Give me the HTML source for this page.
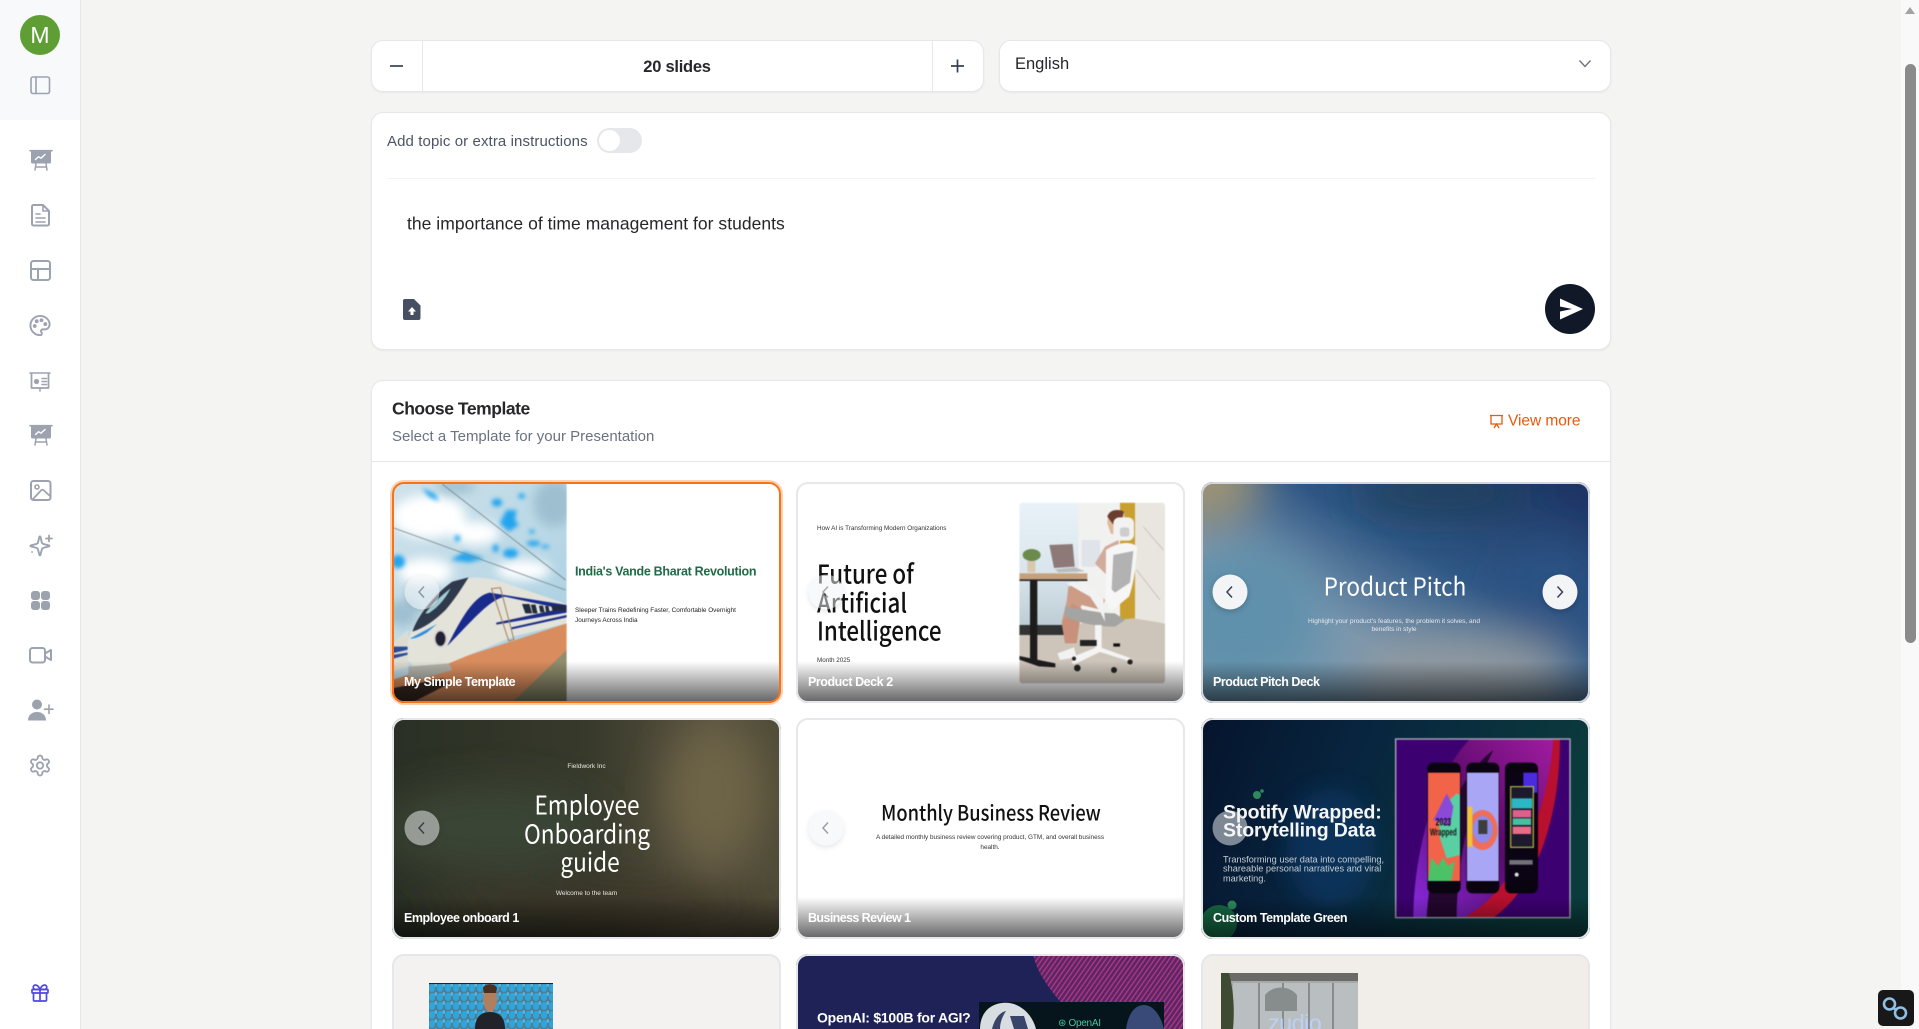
<!DOCTYPE html>
<html lang="en">
<head>
<meta charset="utf-8">
<title>Choose Template</title>
<style>
html,body{margin:0;padding:0;width:1919px;height:1029px;overflow:hidden;background:#f4f4f2;font-family:"Liberation Sans",sans-serif;color:#1f2937}
*{box-sizing:border-box}
#root{position:absolute;left:0;top:0;width:1919px;height:1029px;overflow:hidden;background:#f4f4f2}
.a{position:absolute}
.t{position:absolute;white-space:nowrap;transform:translateY(-50%);line-height:1.2}
.c{position:absolute;white-space:nowrap;transform:translate(-50%,-50%);line-height:1.2;text-align:center}
.n{font-family:"Noto Sans CJK JP","Liberation Sans",sans-serif;font-weight:500}
.card{position:absolute;background:#fff;border:1px solid #e5e7eb;border-radius:12px;box-shadow:0 1px 2px rgba(0,0,0,.05)}
.tile{position:absolute;width:389px;height:221px;border-radius:12px;overflow:hidden;background:#fff}
.in{position:absolute;width:1919px;height:1029px}
.bd{position:absolute;width:389px;height:221px;border-radius:12px;border:2px solid #e5e7eb}
.ov{position:absolute;height:42px;background:linear-gradient(to bottom,rgba(0,0,0,0),rgba(0,0,0,.62))}
.cap{position:absolute;white-space:nowrap;transform:translateY(-50%);color:#fff;font-size:12.5px;font-weight:700;letter-spacing:-.45px}
.btn{position:absolute;width:35px;height:35px;border-radius:50%;background:#f3f4f6;box-shadow:0 2px 6px rgba(0,0,0,.2);transform:translate(-50%,-50%)}
.btn svg{position:absolute;left:9px;top:9px}
svg{display:block}
</style>
</head>
<body>
<div id="root">

<!-- Sidebar -->
<div class="a" style="left:0;top:0;width:81px;height:1029px;background:#fff;border-right:1px solid #e5e7eb"></div>
<div class="a" style="left:0;top:0;width:80px;height:120px;background:#f8f9fb"></div>
<div class="a" style="left:20px;top:15px;width:40px;height:40px;border-radius:50%;background:#5f9e35;color:#fff;font-size:23px;line-height:40px;text-align:center">M</div>

<svg class="a" style="left:0;top:0" width="80" height="1029" viewBox="0 0 80 1029" fill="none" stroke="#9ca3af" stroke-width="2" stroke-linecap="round" stroke-linejoin="round">
  <!-- panel -->
  <rect x="31" y="77" width="18.5" height="16.5" rx="2" stroke-width="1.6"/>
  <path d="M36 77v16.5" stroke-width="1.6"/>
  <!-- presentation 1 -->
  <g id="pres">
    <path d="M30 150.7h22" stroke-width="1.6"/>
    <path d="M31 151h20v11a1.500 1.500 0 0 1-1.500 1.500h-17a1.500 1.500 0 0 1-1.500-1.500z" fill="#9ca3af" stroke="none"/>
    <path d="M35.500 159.500l3-2.800 2.500 1.500 4-3.700" stroke="#fff" stroke-width="1.400"/>
    <path d="M36 163.500l-1 6.500M46 163.500l1 6.500M35.500 167h11" stroke-width="1.500"/>
  </g>
  <!-- doc -->
  <path d="M33.500 205h9.500l6 6v13a1.500 1.500 0 0 1-1.500 1.500h-14a1.500 1.500 0 0 1-1.500-1.500v-17.500a1.500 1.500 0 0 1 1.500-1.500z"/>
  <path d="M43 205v6h6M36 214h4M36 218h9M36 222h9" stroke-width="1.600"/>
  <!-- layout -->
  <rect x="31" y="261" width="19" height="19" rx="2.500"/>
  <path d="M31 269h19M38 269v11"/>
  <!-- palette -->
  <g transform="translate(28.500,314) scale(.96)">
    <path d="M12 22a1 1 0 0 1 0-20 10 9 0 0 1 10 9 5 5 0 0 1-5 5h-2.250a1.750 1.750 0 0 0-1.400 2.800l.3.4a1.750 1.750 0 0 1-1.400 2.800z"/>
    <circle cx="13.500" cy="6.500" r="1" fill="#9ca3af"/><circle cx="17.500" cy="10.500" r="1" fill="#9ca3af"/><circle cx="6.500" cy="12.500" r="1" fill="#9ca3af"/><circle cx="8.500" cy="7.500" r="1" fill="#9ca3af"/>
  </g>
  <!-- slides 5 -->
  <g transform="translate(0,1)">
  <path d="M30 372h20" stroke-width="1.600"/>
  <path d="M31.500 373v14h17v-14" stroke-width="1.800"/>
  <path d="M40 387v3" stroke-width="1.500"/>
  <circle cx="36.500" cy="380.500" r="2.600" fill="#9ca3af" stroke="none"/>
  <path d="M42 377.500h4.500M42 380.500h4.500M42 383.500h4.500" stroke-width="1.500"/>
  </g>
  <!-- presentation 2 -->
  <use href="#pres" transform="translate(0,275)"/>
  <!-- image -->
  <rect x="31" y="481" width="19.500" height="19" rx="2.500"/>
  <circle cx="37" cy="487" r="2" stroke-width="1.600"/>
  <path d="M33 499l8-8.500c1-1 2-1 3 0l6 5.500" stroke-width="1.700"/>
  <!-- sparkles -->
  <g transform="translate(28.500,534.500) scale(.95)">
    <path d="M9.937 15.500A2 2 0 0 0 8.500 14.063l-6.135-1.582a.5.5 0 0 1 0-.962L8.500 9.936A2 2 0 0 0 9.937 8.500l1.582-6.135a.5.5 0 0 1 .963 0L14.063 8.500A2 2 0 0 0 15.500 9.937l6.135 1.581a.5.5 0 0 1 0 .964L15.500 14.063a2 2 0 0 0-1.437 1.437l-1.582 6.135a.5.5 0 0 1-.963 0z"/>
  </g>
  <path d="M49 535.500v6M46 538.500h6M32 552h.1" stroke-width="1.800"/>
  <!-- grid -->
  <g fill="#9ca3af" stroke="none">
    <rect x="31" y="591" width="9" height="9" rx="3"/><rect x="41" y="591" width="9" height="9" rx="3"/>
    <rect x="31" y="601" width="9" height="9" rx="3"/><rect x="41" y="601" width="9" height="9" rx="3"/>
  </g>
  <!-- video -->
  <rect x="30" y="648" width="15" height="14.500" rx="2.500"/>
  <path d="M45 653.500l6-3.500v10l-6-3.500"/>
  <!-- user plus -->
  <circle cx="37" cy="704.500" r="5" fill="#9ca3af" stroke="none"/>
  <path d="M28 720.500c0-5.500 4-8.500 9-8.500s9 3 9 8.500z" fill="#9ca3af" stroke="none"/>
  <path d="M49 705v8.500M44.500 709.200h8.500" stroke-width="1.600"/>
  <!-- gear -->
  <g transform="translate(28,753.500)">
    <path d="M12.220 2h-.44a2 2 0 0 0-2 2v.18a2 2 0 0 1-1 1.730l-.43.25a2 2 0 0 1-2 0l-.15-.08a2 2 0 0 0-2.730.73l-.22.38a2 2 0 0 0 .73 2.730l.15.1a2 2 0 0 1 1 1.720v.51a2 2 0 0 1-1 1.740l-.15.09a2 2 0 0 0-.73 2.730l.22.38a2 2 0 0 0 2.730.73l.15-.08a2 2 0 0 1 2 0l.43.25a2 2 0 0 1 1 1.730V20a2 2 0 0 0 2 2h.44a2 2 0 0 0 2-2v-.18a2 2 0 0 1 1-1.730l.43-.25a2 2 0 0 1 2 0l.15.08a2 2 0 0 0 2.730-.73l.22-.39a2 2 0 0 0-.73-2.730l-.15-.08a2 2 0 0 1-1-1.740v-.5a2 2 0 0 1 1-1.740l.15-.09a2 2 0 0 0 .73-2.730l-.22-.38a2 2 0 0 0-2.730-.73l-.15.08a2 2 0 0 1-2 0l-.43-.25a2 2 0 0 1-1-1.730V4a2 2 0 0 0-2-2z" stroke-width="1.800"/>
    <circle cx="12" cy="12" r="3.200" stroke-width="1.800"/>
  </g>
  <!-- gift -->
  <g stroke="#4f46e5" stroke-width="1.700" transform="translate(0,1)">
    <rect x="32" y="988.500" width="16" height="3.500" rx=".8"/>
    <path d="M33.500 992v7a1 1 0 0 0 1 1h11a1 1 0 0 0 1-1v-7M40 988.500V1000"/>
    <path d="M40 988.500c-1-3-3-4.500-4.500-4.500a2.200 2.200 0 0 0 0 4.500zM40 988.500c1-3 3-4.500 4.500-4.500a2.200 2.200 0 0 1 0 4.500z"/>
  </g>
</svg>

<!-- Stepper -->
<div class="card" style="left:371px;top:40px;width:613px;height:52px"></div>
<div class="a" style="left:422px;top:41px;width:1px;height:50px;background:#e5e7eb"></div>
<div class="a" style="left:932px;top:41px;width:1px;height:50px;background:#e5e7eb"></div>
<svg class="a" style="left:389px;top:59px" width="16" height="16" fill="none" stroke="#374151" stroke-width="1.700"><path d="M1 7h13"/></svg>
<svg class="a" style="left:950px;top:58px" width="16" height="16" fill="none" stroke="#374151" stroke-width="1.700"><path d="M1 8h13M7.500 1.500v13"/></svg>
<div class="c" style="left:677px;top:67.500px;font-size:16.500px;font-weight:700;color:#27272a;letter-spacing:-.25px">20 slides</div>

<!-- Language -->
<div class="card" style="left:999px;top:40px;width:612px;height:52px"></div>
<div class="t" style="left:1015px;top:65px;font-size:16.500px;color:#27272a;letter-spacing:0">English</div>
<svg class="a" style="left:1578px;top:58px" width="14" height="12" fill="none" stroke="#6b7280" stroke-width="1.400"><path d="M1.500 2.500l5.500 6 5.500-6"/></svg>

<!-- Prompt card -->
<div class="card" style="left:371px;top:112px;width:1240px;height:238px"></div>
<div class="t" style="left:387px;top:141.500px;font-size:15px;color:#4b5563;letter-spacing:.1px">Add topic or extra instructions</div>
<div class="a" style="left:597px;top:128px;width:45px;height:25px;border-radius:13px;background:#e5e7eb"></div>
<div class="a" style="left:599px;top:130px;width:21px;height:21px;border-radius:50%;background:#fff"></div>
<div class="a" style="left:387px;top:178px;width:1208px;height:1px;background:#f1f2f4"></div>
<div class="t" style="left:407px;top:223.500px;font-size:17.500px;color:#27272a;letter-spacing:.03px">the importance of time management for students</div>
<svg class="a" style="left:403px;top:299px" width="18" height="21" viewBox="0 0 18 21"><path d="M2 0h9l6.500 6.500V19a2 2 0 0 1-2 2H2a2 2 0 0 1-2-2V2a2 2 0 0 1 2-2z" fill="#475062"/><path d="M9 8l4 4.500h-2.500V16h-3v-3.500H5z" fill="#fff"/></svg>
<div class="a" style="left:1545px;top:284px;width:50px;height:50px;border-radius:50%;background:#111827"></div>
<svg class="a" style="left:1558px;top:297px" width="26" height="24" viewBox="0 0 26 24"><path d="M2 1.500L25 12 2 22.500V14.500l12-2.500-12-2.500z" fill="#fff"/></svg>

<!-- Template card -->
<div class="card" style="left:371px;top:380px;width:1240px;height:670px"></div>
<div class="t" style="left:392px;top:409px;font-size:17.500px;font-weight:700;color:#27272a;letter-spacing:-.45px">Choose Template</div>
<div class="t" style="left:392px;top:436.500px;font-size:15px;color:#6b7280;letter-spacing:0">Select a Template for your Presentation</div>
<svg class="a" style="left:1489px;top:414px" width="15" height="15" viewBox="0 0 15 15" fill="none" stroke="#ea580c" stroke-width="1.300"><path d="M1 1.500h13M2 1.500v8.500h11v-8.500M5 14l2.500-4 2.500 4"/></svg>
<div class="t" style="left:1508px;top:422px;font-size:15.500px;color:#ea580c;letter-spacing:-.05px">View more</div>
<div class="a" style="left:372px;top:461px;width:1238px;height:1px;background:#e5e7eb"></div>

<!-- Tile 1 -->
<div class="tile" style="left:392px;top:482px"><div class="in" style="left:-392px;top:-482px">
  <svg class="a" style="left:388px;top:480px;filter:blur(.5px)" width="400" height="228" viewBox="0 0 1182 684" preserveAspectRatio="none">
    <defs>
      <linearGradient id="sky" x1="0" y1="0" x2="1" y2="1"><stop offset="0" stop-color="#cfe2ea"/><stop offset=".6" stop-color="#b8d7e6"/><stop offset="1" stop-color="#9fcadd"/></linearGradient>
      <filter id="b6" x="-40%" y="-40%" width="180%" height="180%"><feGaussianBlur stdDeviation="6"/></filter><filter id="b14" x="-50%" y="-50%" width="200%" height="200%"><feGaussianBlur stdDeviation="16"/></filter>
    </defs>
    <rect width="528" height="684" fill="url(#sky)"/>
    <g filter="url(#b14)" fill="#ffffff"><ellipse cx="120" cy="110" rx="110" ry="65"/><ellipse cx="110" cy="275" rx="80" ry="40"/><ellipse cx="400" cy="270" rx="80" ry="30"/><ellipse cx="260" cy="160" rx="70" ry="35"/></g>
    <g filter="url(#b14)" fill="#9dbfd0"><ellipse cx="490" cy="70" rx="60" ry="70"/><ellipse cx="40" cy="400" rx="50" ry="40"/><ellipse cx="200" cy="20" rx="60" ry="20"/></g>
    <g filter="url(#b6)" fill="#22a4ee">
      <path d="M330 130l20-40 30 0-5 30 12 15-30 20z"/><path d="M185 240l40-25 60 20-45 12z"/><ellipse cx="362" cy="220" rx="22" ry="14"/><path d="M100 22l40 20 10 22-30-15z"/><ellipse cx="322" cy="68" rx="16" ry="12"/><ellipse cx="30" cy="245" rx="20" ry="20"/><ellipse cx="430" cy="190" rx="20" ry="8"/><ellipse cx="318" cy="205" rx="9" ry="12"/><ellipse cx="205" cy="175" rx="8" ry="10"/><ellipse cx="395" cy="48" rx="10" ry="8"/><ellipse cx="425" cy="155" rx="8" ry="6"/><ellipse cx="465" cy="200" rx="12" ry="5"/>
    </g>
    <path d="M160 12L525 300M12 142L525 330" stroke="#76878f" stroke-width="2.500" fill="none"/>
    <path d="M12 684V600L528 430V684z" fill="#d98d5e"/>
    <path d="M350 684L528 510V684z" fill="#8f8d6c"/>
    <path d="M12 684V625l150 -30 20 15L40 684z" fill="#3a2a22"/>
    <path d="M12 490L60 450V560L12 575z" fill="#dcdcd2"/>
    <path d="M12 500h50v8l-50 12zM12 525l50-8v6l-50 14z" fill="#2a4b9a"/>
    <path d="M58 540V490C70 430 130 340 195 305C230 290 280 290 320 300L528 372V430L370 470L180 550L130 575L85 570z" fill="#e3e3da"/>
    <path d="M72 455C85 410 140 340 190 305L238 292C215 330 195 360 170 390C140 420 105 445 72 455z" fill="#2f3a4c"/>
    <path d="M110 400C130 370 160 345 185 325C170 355 150 380 120 400z" fill="#a4d2d8"/>
    <path d="M66 475L145 432L115 458C95 470 80 476 66 476z" fill="#2e8fe0"/>
    <path d="M175 498C215 420 250 350 300 338L528 375V390L345 350C300 360 260 410 175 498z" fill="#182a8c"/>
    <path d="M320 428L528 382V398L320 434zM365 442L528 405V412L365 448z" fill="#1c2c88"/>
    <ellipse cx="155" cy="476" rx="17" ry="24" fill="#223" stroke="#ccc" stroke-width="5"/>
    <path d="M396 372h22l8 28h-20zM422 374h14l6 26h-14zM446 377h12l5 20h-13zM464 378h10l4 18h-11zM482 376h44v16h-40z" fill="#222b3d"/>
    <path d="M306 326l26-3 40 155-15 5z" fill="none" stroke="#a67e5a" stroke-width="3"/>
    <path d="M60 560l120-10 10 20-100 30-30-10z" fill="#b4b4ac"/>
    <rect x="528" y="0" width="660" height="684" fill="#fff"/>
  </svg>
  <div class="t" style="left:575px;top:571.500px;font-size:12.500px;font-weight:700;color:#1f6b46;letter-spacing:-.3px">India's Vande Bharat Revolution</div>
  <div class="t" style="left:575px;top:610.500px;font-size:6.400px;color:#222">Sleeper Trains Redefining Faster, Comfortable Overnight</div>
  <div class="t" style="left:575px;top:621px;font-size:6.400px;color:#222">Journeys Across India</div>
  <div class="ov" style="left:392px;top:661px;width:389px"></div>
  <div class="cap" style="left:404px;top:682px">My Simple Template</div>
  <div class="btn" style="left:422px;top:592px;opacity:.5"><svg width="17" height="17" fill="none" stroke="#4b5563" stroke-width="1.500"><path d="M10.500 3L5.500 8.500l5 5.500"/></svg></div>
</div></div>
<div class="a" style="left:390px;top:480px;width:393px;height:225px;border-radius:14px;border:2px solid rgba(249,115,22,.32)"></div>
<div class="bd" style="left:392px;top:482px;border-color:#f97316"></div>

<!-- Tile 2 -->
<div class="tile" style="left:796px;top:482px"><div class="in" style="left:-796px;top:-482px">
  <div class="t" style="left:817px;top:529px;font-size:6.350px;color:#333">How AI is Transforming Modern Organizations</div>
  <div class="t n" style="left:817px;top:572.500px;font-size:26px;color:#111;transform-origin:left center;transform:translateY(-50%) scaleX(.86)">Future of</div>
  <div class="t n" style="left:817px;top:601.500px;font-size:26px;color:#111;transform-origin:left center;transform:translateY(-50%) scaleX(.86)">Artificial</div>
  <div class="t n" style="left:817px;top:630px;font-size:26px;color:#111;transform-origin:left center;transform:translateY(-50%) scaleX(.86)">Intelligence</div>
  <div class="t" style="left:817px;top:661px;font-size:6.300px;color:#333">Month 2025</div>
  <svg class="a" style="left:1000px;top:490px;filter:blur(.5px)" width="190" height="215" viewBox="0 0 570 645">
    <defs>
      <clipPath id="pc"><rect x="58" y="38" width="437" height="542" rx="10"/></clipPath>
      <linearGradient id="win" x1="0" y1="0" x2="0" y2="1"><stop offset="0" stop-color="#e9f2f8"/><stop offset=".55" stop-color="#d8e4ec"/><stop offset="1" stop-color="#b8c8d0"/></linearGradient>
    </defs>
    <g clip-path="url(#pc)">
      <rect x="58" y="38" width="180" height="400" fill="url(#win)"/>
      <rect x="235" y="38" width="130" height="400" fill="#f1f1ef"/>
      <rect x="360" y="38" width="45" height="360" fill="#c9a030"/>
      <rect x="405" y="38" width="90" height="360" fill="#e9e5df"/>
      <path d="M410 240L480 330M430 110L490 180" stroke="#bdb6ac" stroke-width="2" fill="none"/>
      <path d="M58 430L190 405L400 385L495 400V580H58z" fill="#cdc5ba"/>
      <rect x="58" y="405" width="135" height="30" fill="#333"/>
      <rect x="58" y="250" width="204" height="20" fill="#c6a07c"/>
      <rect x="58" y="268" width="204" height="5" fill="#2a2a2a"/>
      <rect x="90" y="270" width="22" height="240" fill="#1c1c1c"/>
      <path d="M58 498l108 22v12l-50-3-58-20z" fill="#1c1c1c"/>
      <path d="M148 165l70-3 6 68-62 4z" fill="#8d7a78"/>
      <path d="M165 238l60-6 30 12-80 3z" fill="#bbb"/>
      <rect x="82" y="212" width="24" height="35" rx="4" fill="#d8c8b0"/>
      <ellipse cx="95" cy="195" rx="27" ry="18" fill="#6c8a4c"/>
      <rect x="245" y="150" width="55" height="80" fill="#dfe4ea"/>
      <path d="M322 100c0-30 20-40 50-35l5 30-20 45-25-10z" fill="#e0b8a0"/>
      <path d="M322 80c5-20 30-25 50-15l-12 40-12 10z" fill="#6a3d2e"/>
      <path d="M285 220l30-50 40-20 10 60-30 60z" fill="#d2ab9c"/>
      <path d="M205 290c40-10 80 10 110 40l-10 30-60-15-30 60-30-10 15-60z" fill="#cc9c87"/>
      <path d="M185 400l30-60 30 15-15 105h-35z" fill="#c9917b"/>
      <path d="M172 490l50-18 8 30-50 8z" fill="#f2f2f2"/>
      <path d="M318 180c30-20 70-30 94-10-5 60-10 110-25 150l-55 45-15-40z" fill="#f6f6f6"/>
      <path d="M340 195l60-12-10 95-45 30-10-10z" fill="#b2b2b2"/>
      <rect x="340" y="82" width="62" height="70" rx="18" fill="#f2f2f2"/>
      <rect x="360" y="112" width="28" height="28" rx="8" fill="#cdcdcd"/>
      <path d="M195 350c40 5 100 20 150 20l30 20-30 20c-50 0-110-10-150-30z" fill="#a4a4a2"/>
      <path d="M200 280c30-15 70 10 110 45l5 70-15-30-30-45z" fill="#f2f2f2"/>
      <rect x="285" y="405" width="20" height="70" fill="#f4f4f4"/>
      <path d="M295 470l-75 30-5 20 10 2 75-36 80 25 5 15 10-2-5-20z" fill="#f4f4f4"/>
      <path d="M340 460h20v10h-20z" fill="#111"/>
      <circle cx="232" cy="534" r="10" fill="#222"/><circle cx="342" cy="540" r="9" fill="#222"/><circle cx="390" cy="516" r="8" fill="#222"/><circle cx="222" cy="506" r="6" fill="#222"/>
      <rect x="240" y="450" width="50" height="18" fill="#222"/>
    </g>
  </svg>
  <div class="ov" style="left:796px;top:661px;width:389px"></div>
  <div class="cap" style="left:808px;top:682px">Product Deck 2</div>
  <div class="btn" style="left:826px;top:592px;opacity:.5"><svg width="17" height="17" fill="none" stroke="#4b5563" stroke-width="1.500"><path d="M10.500 3L5.500 8.500l5 5.500"/></svg></div>
</div></div>
<div class="bd" style="left:796px;top:482px"></div>

<!-- Tile 3 -->
<div class="tile" style="left:1201px;top:482px;background:#2c4f7f"><div class="in" style="left:-1201px;top:-482px">
  <svg class="a" style="left:1201px;top:482px" width="389" height="221" viewBox="0 0 389 221">
    <defs>
      <filter id="b30" x="-60%" y="-60%" width="220%" height="220%"><feGaussianBlur stdDeviation="22"/></filter>
      <linearGradient id="p3" x1="0" y1="1" x2="1" y2="0"><stop offset="0" stop-color="#6a96ae"/><stop offset=".35" stop-color="#7a97ae"/><stop offset=".62" stop-color="#2f5785"/><stop offset="1" stop-color="#1c3262"/></linearGradient>
    </defs>
    <rect width="389" height="221" fill="url(#p3)"/>
    <g filter="url(#b30)">
      <ellipse cx="0" cy="0" rx="60" ry="45" fill="#9c9376"/>
      <ellipse cx="40" cy="130" rx="80" ry="70" fill="#5f90ac"/>
      <ellipse cx="240" cy="10" rx="90" ry="20" fill="#1f3f58"/>
      <ellipse cx="350" cy="110" rx="50" ry="50" fill="#2c5284"/>
      <ellipse cx="260" cy="190" rx="110" ry="40" fill="#8f989f"/>
    </g>
  </svg>
  <div class="c n" style="left:1395px;top:585.500px;font-size:24.500px;font-weight:400;color:#fff;transform:translate(-50%,-50%) scaleX(.92)">Product Pitch</div>
  <div class="c" style="left:1394px;top:622px;font-size:6.550px;color:#e5e9ee">Highlight your product's features, the problem it solves, and</div>
  <div class="c" style="left:1394px;top:630px;font-size:6.550px;color:#e5e9ee">benefits in style</div>
  <div class="ov" style="left:1201px;top:661px;width:389px"></div>
  <div class="cap" style="left:1213px;top:682px">Product Pitch Deck</div>
  <div class="btn" style="left:1230px;top:592px"><svg width="17" height="17" fill="none" stroke="#374151" stroke-width="1.500"><path d="M10.500 3L5.500 8.500l5 5.500"/></svg></div>
  <div class="btn" style="left:1560px;top:592px"><svg width="17" height="17" fill="none" stroke="#374151" stroke-width="1.500"><path d="M6 3l5 5.500L6 14"/></svg></div>
</div></div>
<div class="bd" style="left:1201px;top:482px;border-color:#d4d6de"></div>

<!-- Tile 4 -->
<div class="tile" style="left:392px;top:718px;background:#2b3026"><div class="in" style="left:-392px;top:-718px">
  <svg class="a" style="left:392px;top:718px" width="389" height="221" viewBox="0 0 389 221">
    <defs>
      <linearGradient id="p4" x1="0" y1="0" x2="1" y2="0"><stop offset="0" stop-color="#2a3025"/><stop offset=".5" stop-color="#37392b"/><stop offset=".82" stop-color="#5a5340"/><stop offset="1" stop-color="#4f4b37"/></linearGradient>
      <filter id="b20" x="-60%" y="-60%" width="220%" height="220%"><feGaussianBlur stdDeviation="20"/></filter>
    </defs>
    <rect width="389" height="221" fill="url(#p4)"/>
    <g filter="url(#b20)">
      <ellipse cx="322" cy="75" rx="50" ry="70" fill="#6d6347"/>
      <ellipse cx="100" cy="110" rx="110" ry="45" fill="#3a4434"/>
      <ellipse cx="210" cy="190" rx="170" ry="25" fill="#3a3628"/>
    </g>
  </svg>
  <div class="c" style="left:586.500px;top:767px;font-size:6.500px;color:#e8e8e0">Fieldwork Inc</div>
  <div class="c n" style="left:587px;top:804px;font-size:26px;font-weight:400;color:#fff;transform:translate(-50%,-50%) scaleX(.87)">Employee</div>
  <div class="c n" style="left:587px;top:832.500px;font-size:26px;font-weight:400;color:#fff;transform:translate(-50%,-50%) scaleX(.87)">Onboarding</div>
  <div class="c n" style="left:590px;top:861px;font-size:26px;font-weight:400;color:#fff;transform:translate(-50%,-50%) scaleX(.87)">guide</div>
  <div class="c" style="left:586.500px;top:894px;font-size:6.500px;color:#e8e8e0">Welcome to the team</div>
  <div class="ov" style="left:392px;top:897px;width:389px"></div>
  <div class="cap" style="left:404px;top:918px">Employee onboard 1</div>
  <div class="btn" style="left:422px;top:828px;opacity:.5"><svg width="17" height="17" fill="none" stroke="#374151" stroke-width="1.500"><path d="M10.500 3L5.500 8.500l5 5.500"/></svg></div>
</div></div>
<div class="bd" style="left:392px;top:718px"></div>

<!-- Tile 5 -->
<div class="tile" style="left:796px;top:718px"><div class="in" style="left:-796px;top:-718px">
  <div class="c n" style="left:991px;top:813px;font-size:21px;color:#111;transform:translate(-50%,-50%) scaleX(.87)">Monthly Business Review</div>
  <div class="c" style="left:990px;top:838px;font-size:6.400px;color:#333">A detailed monthly business review covering product, GTM, and overall business</div>
  <div class="c" style="left:990px;top:848px;font-size:6.400px;color:#333">health.</div>
  <div class="ov" style="left:796px;top:897px;width:389px"></div>
  <div class="cap" style="left:808px;top:918px;letter-spacing:-.6px">Business Review 1</div>
  <div class="btn" style="left:826px;top:828px;opacity:.5"><svg width="17" height="17" fill="none" stroke="#374151" stroke-width="1.500"><path d="M10.500 3L5.500 8.500l5 5.500"/></svg></div>
</div></div>
<div class="bd" style="left:796px;top:718px"></div>

<!-- Tile 6 -->
<div class="tile" style="left:1201px;top:718px;background:#07203c"><div class="in" style="left:-1201px;top:-718px">
  <svg class="a" style="left:1201px;top:718px" width="389" height="221" viewBox="0 0 389 221">
    <defs>
      <linearGradient id="p6" x1="0" y1=".1" x2="1" y2=".3"><stop offset="0" stop-color="#06152e"/><stop offset=".4" stop-color="#08253f"/><stop offset="1" stop-color="#0b3b3c"/></linearGradient>
      <filter id="b10" x="-60%" y="-60%" width="220%" height="220%"><feGaussianBlur stdDeviation="10"/></filter>
    </defs>
    <rect width="389" height="221" fill="url(#p6)"/>
    <ellipse cx="130" cy="130" rx="45" ry="60" fill="#0c3a6a" opacity=".6" filter="url(#b10)"/>
    <circle cx="56" cy="77" r="4" fill="#2e8a5c"/>
    <circle cx="61" cy="73" r="1.800" fill="#2e8a5c"/>
    <circle cx="18" cy="205" r="18" fill="#166a44"/>
    <circle cx="31" cy="187" r="4.500" fill="#2e8a5c"/>
  </svg>
  <div class="btn" style="left:1230px;top:828px;opacity:.5"></div>
  <div class="t" style="left:1223px;top:813px;font-size:19.500px;font-weight:700;color:#f5f5f5;letter-spacing:-.15px">Spotify Wrapped:</div>
  <div class="t" style="left:1223px;top:830.500px;font-size:19.500px;font-weight:700;color:#f5f5f5;letter-spacing:-.15px">Storytelling Data</div>
  <div class="t" style="left:1223px;top:859.500px;font-size:9.200px;color:#c6ced6">Transforming user data into compelling,</div>
  <div class="t" style="left:1223px;top:869px;font-size:9.200px;color:#c6ced6">shareable personal narratives and viral</div>
  <div class="t" style="left:1223px;top:879px;font-size:9.200px;color:#c6ced6">marketing.</div>
  <svg class="a" style="left:1390px;top:730px;filter:blur(.4px)" width="200" height="200" viewBox="0 0 600 600">
    <defs>
      <linearGradient id="sw" x1="0" y1="1" x2="1" y2="0"><stop offset="0" stop-color="#8a2be2"/><stop offset=".5" stop-color="#5a0a6a"/><stop offset="1" stop-color="#a01ca0"/></linearGradient>
      <clipPath id="f6"><rect x="17" y="27" width="523" height="536"/></clipPath>
    </defs>
    <rect x="17" y="27" width="523" height="536" fill="#3c0070"/>
    <g clip-path="url(#f6)">
      <path d="M70 563C70 400 120 150 240 27H490C490 250 420 470 260 563z" fill="url(#sw)"/>
      <path d="M220 563C350 500 470 290 490 27H510C510 280 430 480 310 563z" fill="#b8102e"/>
      <path d="M110 563C120 380 180 160 310 60C250 180 200 380 200 563z" fill="#24062e"/>
    </g>
    <rect x="17" y="27" width="523" height="536" fill="none" stroke="#aeb2bd" stroke-width="4"/>
    <rect x="112" y="98" width="100" height="392" rx="18" fill="#0a0410"/>
    <rect x="229" y="98" width="99" height="392" rx="18" fill="#0a0410"/>
    <rect x="345" y="98" width="99" height="392" rx="18" fill="#0a0410"/>
    <rect x="114" y="128" width="96" height="325" fill="#f2644a"/>
    <path d="M145 240l55-50 10 5v180l-40 10-20-60z" fill="#58d0a4"/>
    <path d="M130 270l40-80 20 40 -10 60z" fill="#8a4ad8"/>
    <path d="M114 453l10-70 20 25 15-25 15 25 20-15-10 60z" fill="#4bc268"/>
    <rect x="231" y="128" width="95" height="325" fill="#a9a6f5"/>
    <ellipse cx="278" cy="300" rx="45" ry="60" fill="#ed6e5a"/>
    <rect x="232" y="230" width="15" height="120" fill="#f4c232"/>
    <ellipse cx="278" cy="298" rx="30" ry="40" fill="#8f8bea"/>
    <rect x="265" y="270" width="27" height="42" fill="#3d3d3d"/>
    <rect x="347" y="128" width="95" height="325" fill="#0a0414"/>
    <rect x="400" y="128" width="42" height="60" fill="#4a2be0"/>
    <rect x="362" y="170" width="68" height="182" fill="#1e1a2e" stroke="#c8d24a" stroke-width="3"/>
    <path d="M365 205h62v30h-62z" fill="#2bb8c4"/><path d="M368 240h55v22h-55z" fill="#e0608c"/><path d="M368 265h55v20h-55z" fill="#48c0a0"/><path d="M368 290h55v22h-55z" fill="#e86c88"/>
    <text x="160" y="287" text-anchor="middle" font-family="Liberation Sans,sans-serif" font-weight="700" font-size="32" fill="#111" textLength="46" lengthAdjust="spacingAndGlyphs">2023</text>
    <text x="160" y="316" text-anchor="middle" font-family="Liberation Sans,sans-serif" font-weight="700" font-size="30" fill="#111" textLength="80" lengthAdjust="spacingAndGlyphs">Wrapped</text>
    <rect x="358" y="390" width="70" height="14" fill="#bbb" opacity=".6"/>
    <circle cx="380" cy="434" r="6" fill="#ddd"/>
  </svg>
  <div class="ov" style="left:1201px;top:897px;width:389px;background:linear-gradient(to bottom,rgba(0,0,0,0),rgba(0,0,0,.55))"></div>
  <div class="cap" style="left:1213px;top:918px">Custom Template Green</div>
</div></div>
<div class="bd" style="left:1201px;top:718px"></div>

<!-- Tile 7 -->
<div class="tile" style="left:392px;top:954px;height:75px;border-bottom-left-radius:0;border-bottom-right-radius:0;background:#f3f2f0"><div class="in" style="left:-392px;top:-954px">
  <svg class="a" style="left:429px;top:983px" width="124" height="46" viewBox="0 0 124 46">
    <defs><pattern id="crowd" width="8" height="9" patternUnits="userSpaceOnUse"><rect width="8" height="9" fill="#4f7f92"/><ellipse cx="3" cy="5" rx="3" ry="4" fill="#30a4dc"/><circle cx="7" cy="2" r="1.700" fill="#4fb8e6"/></pattern></defs>
    <rect width="124" height="46" fill="url(#crowd)"/>
    <rect width="124" height="1" fill="#222"/>
    <ellipse cx="61" cy="15" rx="7" ry="14" fill="#b07f60"/>
    <path d="M54 5c2-5 12-5 14 0l-1 5H55z" fill="#4a3020"/>
    <path d="M46 46c0-12 6-17 15-17s15 5 15 17z" fill="#22232a"/>
  </svg>
</div></div>
<div class="bd" style="left:392px;top:954px;height:90px"></div>

<!-- Tile 8 -->
<div class="tile" style="left:796px;top:954px;height:75px;border-bottom-left-radius:0;border-bottom-right-radius:0;background:#1f2257"><div class="in" style="left:-796px;top:-954px">
  <svg class="a" style="left:796px;top:954px" width="389" height="75" viewBox="0 0 389 75">
    <defs><pattern id="ln" width="4" height="4" patternUnits="userSpaceOnUse" patternTransform="rotate(35)"><rect width="4" height="4" fill="#5c2566"/><rect width="1.500" height="4" fill="#a5377e"/></pattern></defs>
    <path d="M237 0H389V75H290C265 50 242 25 237 0z" fill="url(#ln)"/>
    <rect x="183" y="48" width="185" height="27" fill="#06141c"/>
    <path d="M184 75c0-12 6-24 22-26 16-2 30 10 34 26z" fill="#d8dde2"/>
    <path d="M196 75c2-8 6-16 14-18-4 6-6 12-6 18zM214 62h14l4 13h-14z" fill="#3a4468"/>
    <path d="M330 75c2-14 8-24 18-24 8 0 16 8 20 24z" fill="#3a4a78"/>
  </svg>
  <div class="t" style="left:817px;top:1018px;font-size:14px;font-weight:700;color:#fff;letter-spacing:-.25px">OpenAI: $100B for AGI?</div>
  <div class="t" style="left:1058px;top:1024px;font-size:10px;color:#3fc79a;letter-spacing:-.3px">⊛ OpenAI</div>
</div></div>
<div class="bd" style="left:796px;top:954px;height:90px"></div>

<!-- Tile 9 -->
<div class="tile" style="left:1201px;top:954px;height:75px;border-bottom-left-radius:0;border-bottom-right-radius:0;background:#f1eeea"><div class="in" style="left:-1201px;top:-954px">
  <svg class="a" style="left:1221px;top:973px" width="137" height="56" viewBox="0 0 137 56">
    <rect width="137" height="56" fill="#a8a8a6"/>
    <rect y="0" width="137" height="8" fill="#6a6a68"/>
    <path d="M12 10h125v46H12z" fill="#b9bfc0"/>
    <path d="M38 10v46M62 10v46M88 10v46M112 10v46" stroke="#7a7a7a" stroke-width="1.500"/>
    <path d="M0 0h8c4 15 6 35 4 56H0z" fill="#3e4a32"/>
    <path d="M44 22c8-10 24-10 32 0v16H44z" fill="#878d8c"/>
  </svg>
  <div class="t" style="left:1268px;top:1023px;font-size:23.500px;color:#bcd0f4;letter-spacing:-.6px">zudio</div>
</div></div>
<div class="bd" style="left:1201px;top:954px;height:90px"></div>

<!-- Scrollbar -->
<div class="a" style="left:1901px;top:0;width:18px;height:1029px;background:#f9f9f9"></div>
<div class="a" style="left:1905px;top:64px;width:11px;height:579px;border-radius:6px;background:#8a8a8a"></div>
<svg class="a" style="left:1904px;top:6px" width="12" height="10"><path d="M6 1l5 7H1z" fill="#a3a3a3"/></svg>

<!-- Widget -->
<div class="a" style="left:1878px;top:990px;width:36px;height:36px;border-radius:5px;background:#181818"></div>
<svg class="a" style="left:1878px;top:990px" width="36" height="36" fill="none" stroke="#8fbfe4" stroke-width="2.600"><circle cx="11.500" cy="14" r="5.500"/><circle cx="22.500" cy="23" r="5.500"/><path d="M15 18l4 2"/></svg>

</div>
</body>
</html>
